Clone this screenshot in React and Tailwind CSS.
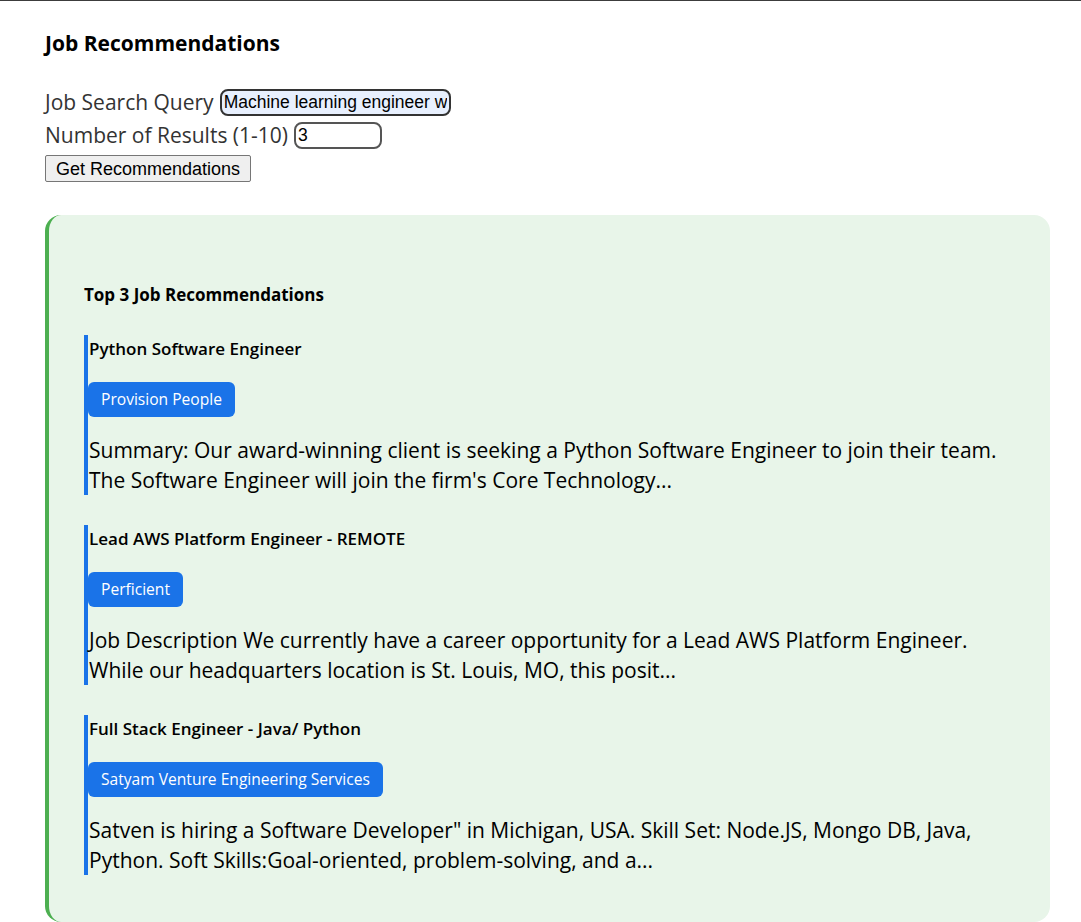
import { useState } from "react";

const jobs = [
  {
    title: "Python Software Engineer",
    company: "Provision People",
    lines: [
      "Summary: Our award-winning client is seeking a Python Software Engineer to join their team.",
      "The Software Engineer will join the firm's Core Technology...",
    ],
  },
  {
    title: "Lead AWS Platform Engineer - REMOTE",
    company: "Perficient",
    lines: [
      "Job Description We currently have a career opportunity for a Lead AWS Platform Engineer.",
      "While our headquarters location is St. Louis, MO, this posit...",
    ],
  },
  {
    title: "Full Stack Engineer - Java/ Python",
    company: "Satyam Venture Engineering Services",
    lines: [
      "Satven is hiring a Software Developer\" in Michigan, USA. Skill Set: Node.JS, Mongo DB, Java,",
      "Python. Soft Skills:Goal-oriented, problem-solving, and a...",
    ],
  },
];

const JobCard = ({ job }) => {
  return (
    <div className="border-l-4 border-[#1a73e8] pl-px">
      <h4 className="text-[17px] font-semibold leading-[28px] text-black">{job.title}</h4>
      <span className="mt-[19px] -ml-px inline-block rounded-md bg-[#1a73e8] px-[13px] py-[6px] text-[15.6px] leading-[23px] text-white">
        {job.company}
      </span>
      <p className="mt-[18px] text-[21px] leading-[30px] text-black">
        {job.lines[0]}
        <br />
        {job.lines[1]}
      </p>
    </div>
  );
};

const App = () => {
  const [query, setQuery] = useState("Machine learning engineer with Python");
  const [count, setCount] = useState("3");

  return (
    <div
      className="min-h-[922px] border-t border-[#3c3c3c] bg-white pl-[45px] pr-[31px] pt-[30px]"
      style={{ fontFamily: '"Open Sans", "Noto Sans", sans-serif' }}
    >
      <h2 className="text-[21px] font-bold leading-[24px] text-black">Job Recommendations</h2>

      <form className="mt-[31px] flex flex-col items-start" onSubmit={(e) => e.preventDefault()}>
        <div className="flex h-[33px] items-center">
          <label htmlFor="query" className="text-[21px] font-medium text-[#333]">
            Job Search Query
          </label>
          <input
            id="query"
            value={query}
            onChange={(e) => setQuery(e.target.value)}
            className="ml-[6px] h-[27px] w-[231px] rounded-lg border-2 border-[#333] bg-[#e8f0fe] px-[2px] text-[17.5px] text-black outline-none"
            style={{ fontFamily: '"Liberation Sans", Arial, sans-serif' }}
          />
        </div>
        <div className="flex h-[33px] items-center">
          <label htmlFor="count" className="text-[21px] font-medium text-[#333]">
            Number of Results (1-10)
          </label>
          <input
            id="count"
            value={count}
            onChange={(e) => setCount(e.target.value)}
            className="ml-[6px] h-[27px] w-[88px] rounded-lg border-2 border-[#555] bg-white px-[2px] text-[17.5px] text-black outline-none"
            style={{ fontFamily: '"Liberation Sans", Arial, sans-serif' }}
          />
        </div>
        <button
          type="submit"
          className="mt-[3px] h-[27px] rounded-[2px] border border-[#767676] bg-[#efefef] px-[10px] text-[18px] leading-none text-black"
          style={{ fontFamily: '"Liberation Sans", Arial, sans-serif' }}
        >
          Get Recommendations
        </button>
      </form>

      <div className="mt-[33px] h-[707px] rounded-2xl border-l-4 border-[#4caf50] bg-[#e8f5e9] pl-[35px] pt-[70px]">
        <h3 className="text-[17px] font-bold leading-[20px] text-black">Top 3 Job Recommendations</h3>
        <div className="mt-[30px] flex flex-col gap-[30px]">
          {jobs.map((job) => (
            <JobCard key={job.title} job={job} />
          ))}
        </div>
      </div>
    </div>
  );
};

export default App;
